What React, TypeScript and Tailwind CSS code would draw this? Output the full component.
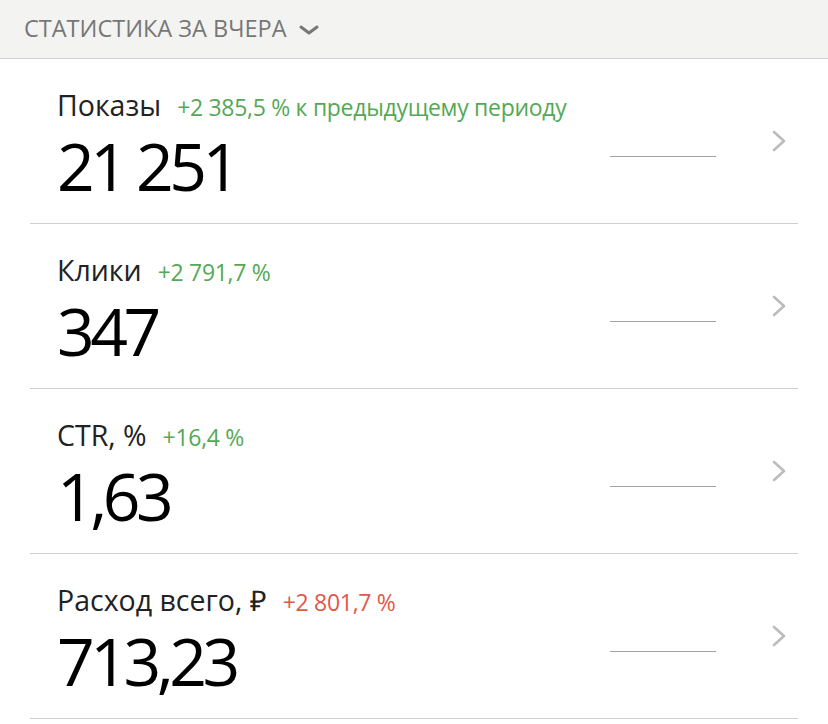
type Stat = {
  label: string;
  delta: string;
  value: string;
  bad?: boolean;
};

const stats: Stat[] = [
  { label: "Показы", delta: "+2 385,5 % к предыдущему периоду", value: "21 251" },
  { label: "Клики", delta: "+2 791,7 %", value: "347" },
  { label: "CTR, %", delta: "+16,4 %", value: "1,63" },
  { label: "Расход всего, ₽", delta: "+2 801,7 %", value: "713,23", bad: true },
];

function StatRow({ stat }: { stat: Stat }) {
  return (
    <div className="mx-[30px] flex h-[165px] items-start border-b border-[#cfcfcf]">
      <div className="flex-1 pl-[27px] pt-[29px]">
        <div className="flex items-baseline gap-[16px]">
          <span className="text-[28.5px] leading-[34px] text-[#222]">{stat.label}</span>
          <span className={`text-[23px] leading-[34px] tracking-[-0.3px] ${stat.bad ? "text-[#e0584b]" : "text-[#55a855]"}`}>
            {stat.delta}
          </span>
        </div>
        <div className="mt-[8px] text-[66px] leading-[66px] tracking-[-4.5px] text-black">{stat.value}</div>
      </div>
      <div className="mt-[97px] mr-[56px] h-[1px] w-[106px] bg-[#a3a3a3]" />
      <svg className="mt-[71px] mr-[11px]" width="15" height="22" viewBox="0 0 15 22" fill="none">
        <polyline points="2,2 12,11 2,20" stroke="#bcbcbc" strokeWidth="2.6" strokeLinecap="round" strokeLinejoin="round" />
      </svg>
    </div>
  );
}

export default function App() {
  return (
    <div className="min-h-[724px] w-[828px] bg-white" style={{ fontFamily: '"Open Sans", sans-serif' }}>
      <div className="flex h-[59px] items-center gap-[11px] border-b border-[#cfcfcf] bg-[#f3f3f2] pl-[24px]">
        <span className="text-[23.5px] text-[#777]">СТАТИСТИКА ЗА ВЧЕРА</span>
        <svg width="22" height="12" viewBox="0 0 22 12" fill="none" className="mt-[2px]">
          <polyline points="3,3 11,9 19,3" stroke="#777" strokeWidth="3" strokeLinecap="round" strokeLinejoin="round" />
        </svg>
      </div>
      {stats.map((s) => (
        <StatRow key={s.label} stat={s} />
      ))}
    </div>
  );
}
